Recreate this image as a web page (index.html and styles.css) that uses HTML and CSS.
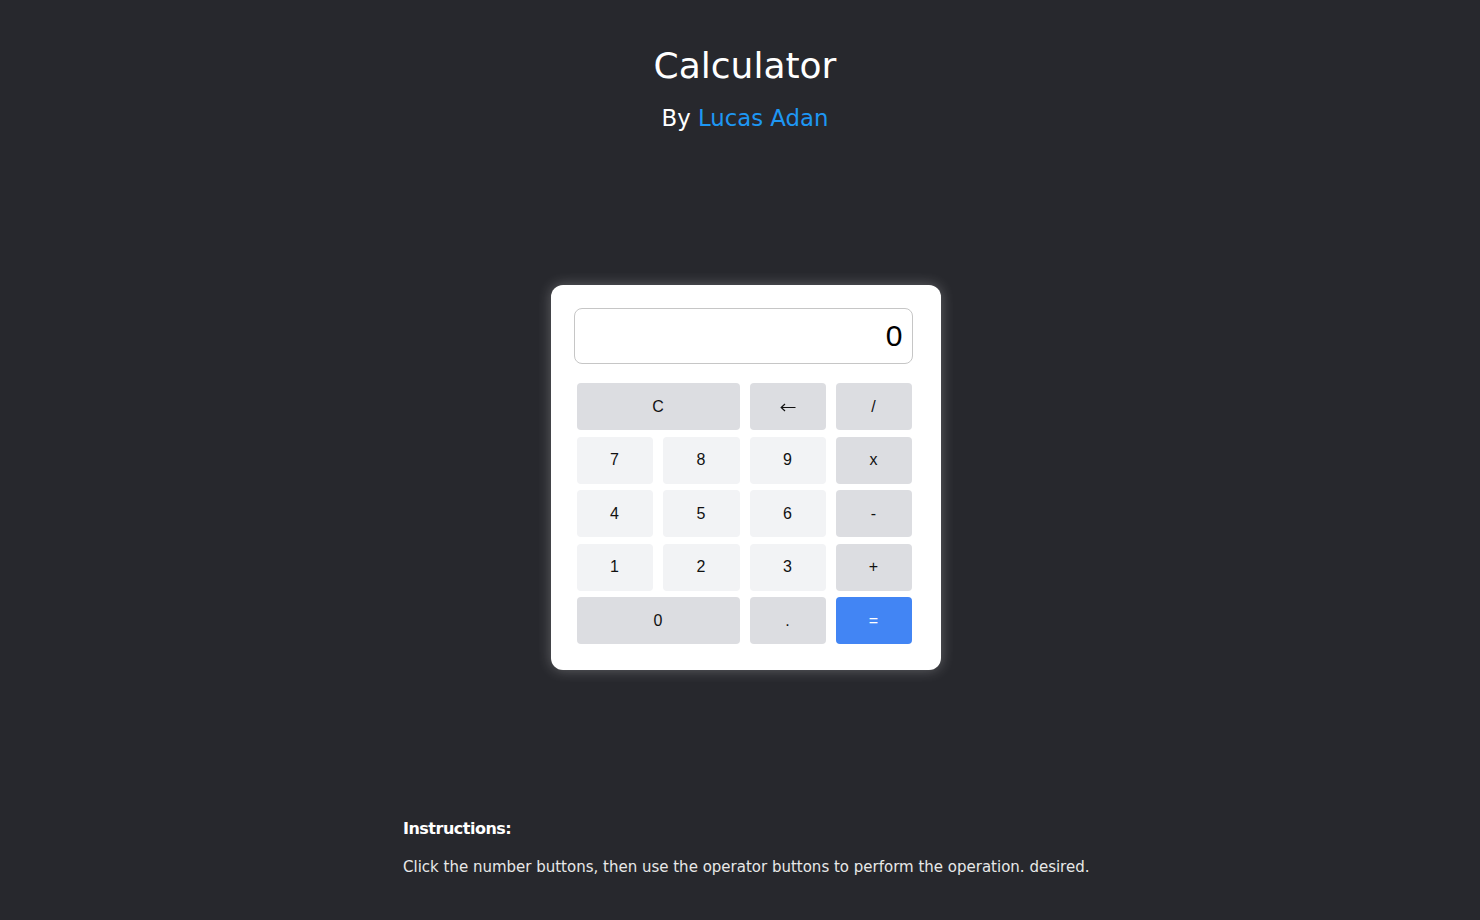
FILE: index.html
```html
<!DOCTYPE html>
<html lang="en">
<head>
<meta charset="utf-8">
<title>Calculator</title>
<link rel="stylesheet" href="styles.css">
</head>
<body>
<header class="header">
  <h1 class="title">Calculator</h1>
  <p class="byline">By <a class="author" href="#">Lucas Adan</a></p>
</header>
<main class="calc">
  <div class="display">0</div>
  <div class="keys">
    <button class="key op wide">C</button>
    <button class="key op" aria-label="backspace"><svg class="arrow" width="16" height="9" viewBox="0 0 16 9"><path d="M1.2 4.5H15.5M5 1L1.2 4.5L5 8" fill="none" stroke="#111" stroke-width="1.2"/></svg></button>
    <button class="key op">/</button>
    <button class="key num">7</button>
    <button class="key num">8</button>
    <button class="key num">9</button>
    <button class="key op">x</button>
    <button class="key num">4</button>
    <button class="key num">5</button>
    <button class="key num">6</button>
    <button class="key op">-</button>
    <button class="key num">1</button>
    <button class="key num">2</button>
    <button class="key num">3</button>
    <button class="key op">+</button>
    <button class="key op wide">0</button>
    <button class="key op">.</button>
    <button class="key eq">=</button>
  </div>
</main>
<section class="instructions">
  <h2 class="inst-title">Instructions:</h2>
  <p class="inst-text">Click the number buttons, then use the operator buttons to perform the operation. desired.</p>
</section>
</body>
</html>
```
FILE: styles.css
```css
html, body {
  margin: 0;
  padding: 0;
}
body {
  background: #27282d;
  font-family: "DejaVu Sans", "Liberation Sans", sans-serif;
  color: #ffffff;
  display: flex;
  flex-direction: column;
  align-items: center;
  min-height: 920px;
  padding-left: 10px;
  box-sizing: border-box;
}
.header {
  text-align: center;
  margin-top: 45px;
}
.title {
  margin: 0;
  font-size: 36px;
  line-height: 42px;
  font-weight: normal;
  color: #ffffff;
}
.byline {
  margin: 18px 0 0;
  font-size: 22.8px;
  line-height: 26px;
  color: #ffffff;
}
.author {
  color: #1e97f3;
  text-decoration: none;
}
.calc {
  margin-top: 154px;
  box-sizing: border-box;
  width: 390px;
  padding: 23px 28px 26px 23px;
  background: #ffffff;
  border-radius: 12px;
  box-shadow: 0 0 14px rgba(255, 255, 255, 0.28);
  margin-left: 1px;
}
.display {
  box-sizing: border-box;
  width: 339px;
  height: 56px;
  border: 1px solid #c6c6c6;
  border-radius: 8px;
  display: flex;
  align-items: center;
  justify-content: flex-end;
  padding-right: 9px;
  font-family: "Liberation Sans", Arial, sans-serif;
  font-size: 30px;
  color: #000000;
}
.keys {
  margin: 19px 0 0 3px;
  display: grid;
  grid-template-columns: 76px 77px 76px 76px;
  grid-auto-rows: 47px;
  column-gap: 10px;
  row-gap: 6.5px;
}
.key {
  border: none;
  border-radius: 4px;
  font-family: "Liberation Sans", Arial, sans-serif;
  font-size: 16px;
  color: #111111;
  padding: 0;
  margin: 0;
  display: flex;
  align-items: center;
  justify-content: center;
}
.arrow {
  display: block;
  margin-top: 2px;
}
.wide {
  grid-column: span 2;
}
.op {
  background: #dcdde1;
}
.num {
  background: #f2f3f5;
}
.eq {
  background: #4285f4;
  color: #ffffff;
}
.instructions {
  align-self: flex-start;
  margin-left: 393px;
  margin-top: 149px;
}
.inst-title {
  margin: 0;
  font-size: 16px;
  line-height: 20px;
  font-weight: bold;
  letter-spacing: -0.5px;
  color: #ffffff;
}
.inst-text {
  margin: 18px 0 0;
  font-size: 15px;
  line-height: 20px;
  color: #e8e8e8;
}
```
